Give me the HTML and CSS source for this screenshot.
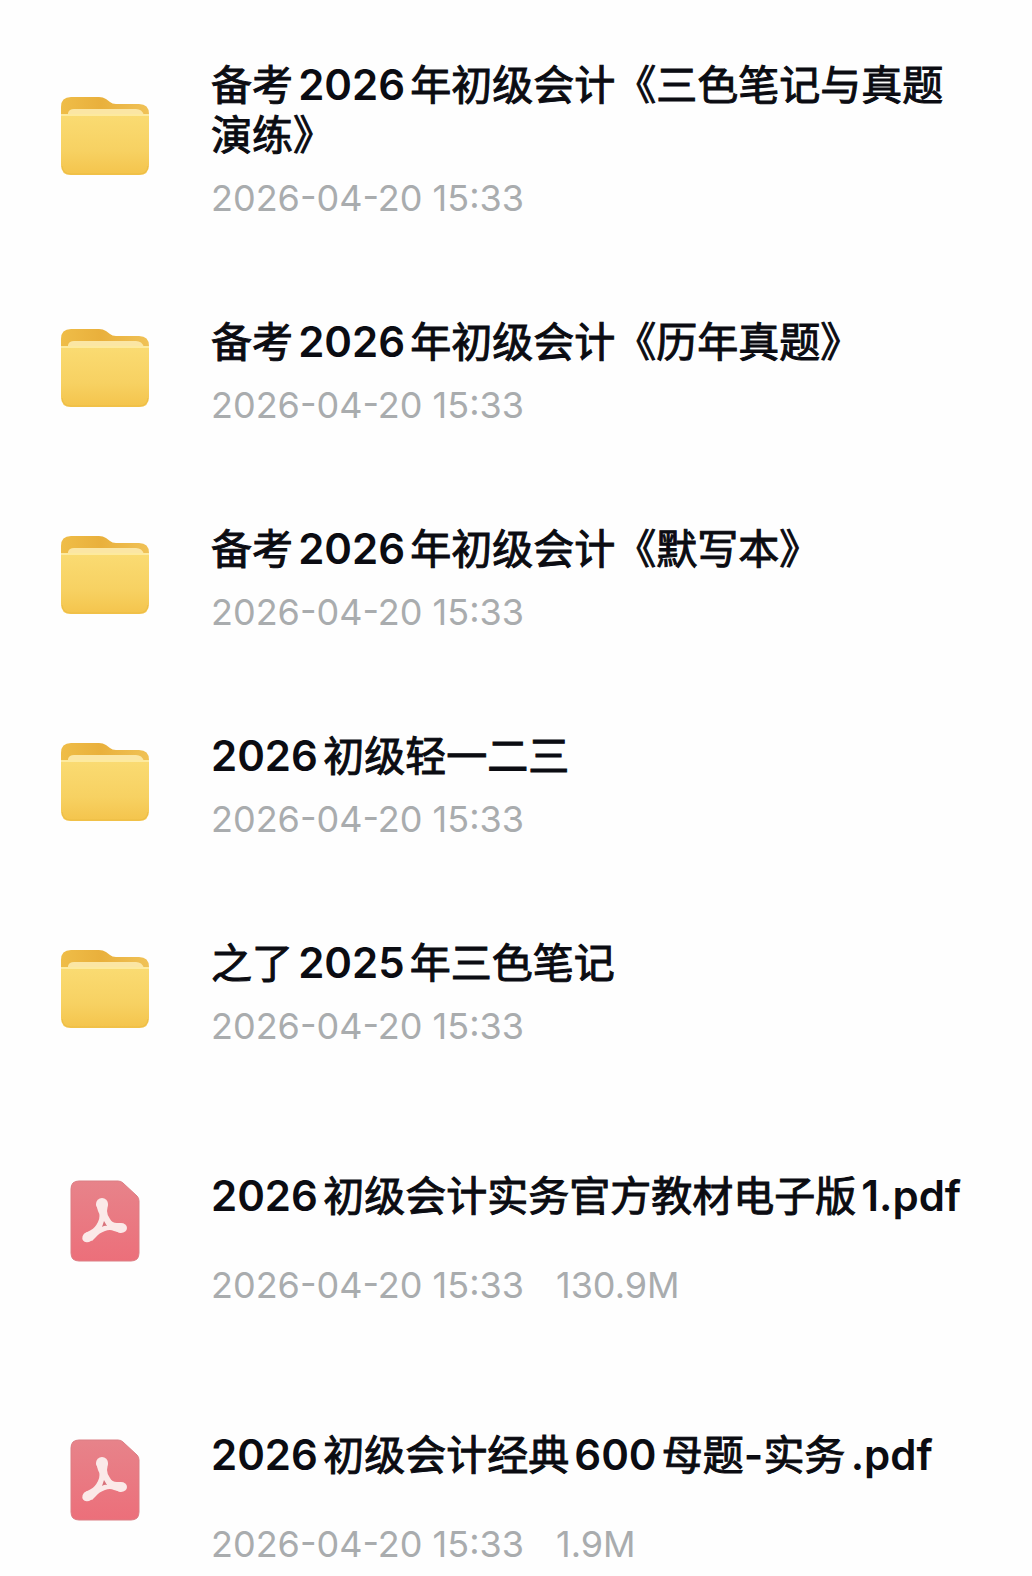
FILE: index.html
```html
<!DOCTYPE html>
<html lang="zh-CN">
	<head>
		<meta charset="UTF-8">
		<meta name="viewport" content="width=device-width, initial-scale=1">
		<title>初级会计</title>
		<link rel="stylesheet" href="styles.css">
	</head>
	<body>
		<!-- shared icons -->
		<svg class="defs" width="0" height="0" aria-hidden="true">
			<defs>
				<linearGradient id="folderBack" x1="0" y1="0" x2="1" y2="0">
					<stop offset="0" stop-color="#efbd48"/>
					<stop offset="0.45" stop-color="#e9b03c"/>
					<stop offset="1" stop-color="#f0c257"/>
				</linearGradient>
				<linearGradient id="folderFront" x1="0" y1="0" x2="0" y2="1">
					<stop offset="0" stop-color="#fadb72"/>
					<stop offset="0.6" stop-color="#f7d162"/>
					<stop offset="1" stop-color="#f4c44c"/>
				</linearGradient>
				<linearGradient id="pdfPage" x1="0" y1="0" x2="0" y2="1">
					<stop offset="0" stop-color="#e7838a"/>
					<stop offset="1" stop-color="#ec6f7a"/>
				</linearGradient>
				<symbol id="folder" viewBox="0 0 90 80">
					<path fill="url(#folderBack)" d="M1 24V11Q1 1 11 1H39Q43 1 46 3L50 6Q52 8 56 8H79Q89 8 89 18V30H1Z"/>
					<path fill="#fbe6a4" d="M8 22V17Q9 13 14 13H76Q82 13 84 19V22Z"/>
					<path fill="url(#folderFront)" d="M1 19H89V69Q89 79 79 79H11Q1 79 1 69Z"/>
					<path fill="#fdea9e" d="M1 18H89V20H1Z"/>
					<path fill="none" stroke="#edbd45" stroke-width="1" d="M2 70Q3 78 11 78H79Q87 78 88 70"/>
				</symbol>
				<symbol id="pdf" viewBox="0 0 70 82">
					<path fill="url(#pdfPage)" stroke="#dc7e84" stroke-width="1" d="M9 1H48Q51 1 53 3L67 16Q69 18 69 21V73Q69 81 61 81H9Q1 81 1 73V9Q1 1 9 1Z"/>
					<g fill="#fbe9e8">
						<ellipse cx="32" cy="24" rx="6" ry="6"/>
						<ellipse cx="51" cy="48" rx="6" ry="5"/>
						<ellipse cx="18" cy="57" rx="6" ry="5" transform="rotate(-35 18 57)"/>
						<path d="M26 24L28 31Q31 36 28 42Q25 48 21 50L14 54L22 61L26 57Q29 53 35 51Q40 49 44 51L51 53L51 43L47 43Q42 43 40 39Q37 35 37 31L38 24Z"/>
					</g>
					<path fill="#d8717a" d="M34 41L37 46Q35 45 32 47Z"/>
				</symbol>
			</defs>
		</svg>

		<ul class="files">
			<li class="file">
				<svg class="icon" aria-hidden="true"><use href="#folder"/></svg>
				<div class="info">
					<h3 class="name">备考<b>2026</b>年初级会计《三色笔记与真题演练》</h3>
					<p class="meta"><time>2026-04-20 15:33</time></p>
				</div>
			</li>
			<li class="file">
				<svg class="icon" aria-hidden="true"><use href="#folder"/></svg>
				<div class="info">
					<h3 class="name">备考<b>2026</b>年初级会计《历年真题》</h3>
					<p class="meta"><time>2026-04-20 15:33</time></p>
				</div>
			</li>
			<li class="file">
				<svg class="icon" aria-hidden="true"><use href="#folder"/></svg>
				<div class="info">
					<h3 class="name">备考<b>2026</b>年初级会计《默写本》</h3>
					<p class="meta"><time>2026-04-20 15:33</time></p>
				</div>
			</li>
			<li class="file">
				<svg class="icon" aria-hidden="true"><use href="#folder"/></svg>
				<div class="info">
					<h3 class="name"><b>2026</b>初级轻一二三</h3>
					<p class="meta"><time>2026-04-20 15:33</time></p>
				</div>
			</li>
			<li class="file">
				<svg class="icon" aria-hidden="true"><use href="#folder"/></svg>
				<div class="info">
					<h3 class="name">之了<b>2025</b>年三色笔记</h3>
					<p class="meta"><time>2026-04-20 15:33</time></p>
				</div>
			</li>
			<li class="file document">
				<svg class="icon" aria-hidden="true"><use href="#pdf"/></svg>
				<div class="info">
					<h3 class="name"><b>2026</b>初级会计实务官方教材电子版<b>1.pdf</b></h3>
					<p class="meta"><time>2026-04-20 15:33</time><span>130.9M</span></p>
				</div>
			</li>
			<li class="file document">
				<svg class="icon" aria-hidden="true"><use href="#pdf"/></svg>
				<div class="info">
					<h3 class="name"><b>2026</b>初级会计经典<b>600</b>母题<b>-</b>实务<b>.pdf</b></h3>
					<p class="meta"><time>2026-04-20 15:33</time><span>1.9M</span></p>
				</div>
			</li>
		</ul>
	</body>
</html>
```
FILE: styles.css
```css
body {
	margin: 0;
	background: #fefefe;
	font-family: Inter, "Noto Sans CJK SC", sans-serif;
	text-autospace: normal;
}
.defs {
	display: block;
}
.files {
	list-style: none;
	margin: 0;
	padding: 60px 56px 10px 60px;
}
.file {
	display: flex;
	align-items: center;
	gap: 61px;
	margin-bottom: 98px;
}
.file:last-child {
	margin-bottom: 0;
}
.icon {
	flex: none;
	width: 90px;
	height: 80px;
	padding-bottom: 8px;
}
.info {
	flex: 1;
	min-width: 0;
}
.name {
	margin: 0;
	font-size: 41px;
	font-weight: 400;
	line-height: 50px;
	color: #0b0c12;
	-webkit-text-stroke: 1px #0b0c12;
}
/* digits and latin letters use the real semibold */
.name b {
	font-size: 42px;
	font-weight: 600;
	-webkit-text-stroke: 0;
}
.meta {
	display: flex;
	gap: 32px;
	margin: 17px 0 0;
	font-size: 36px;
	line-height: 42px;
	color: #a9acae;
}

/* pdf files */
.document {
	align-items: flex-start;
	margin-top: 124px;
	margin-bottom: 0;
}
.document .icon {
	height: 82px;
	padding: 9px 0 0;
}
.document .meta {
	margin-top: 43px;
}
```
